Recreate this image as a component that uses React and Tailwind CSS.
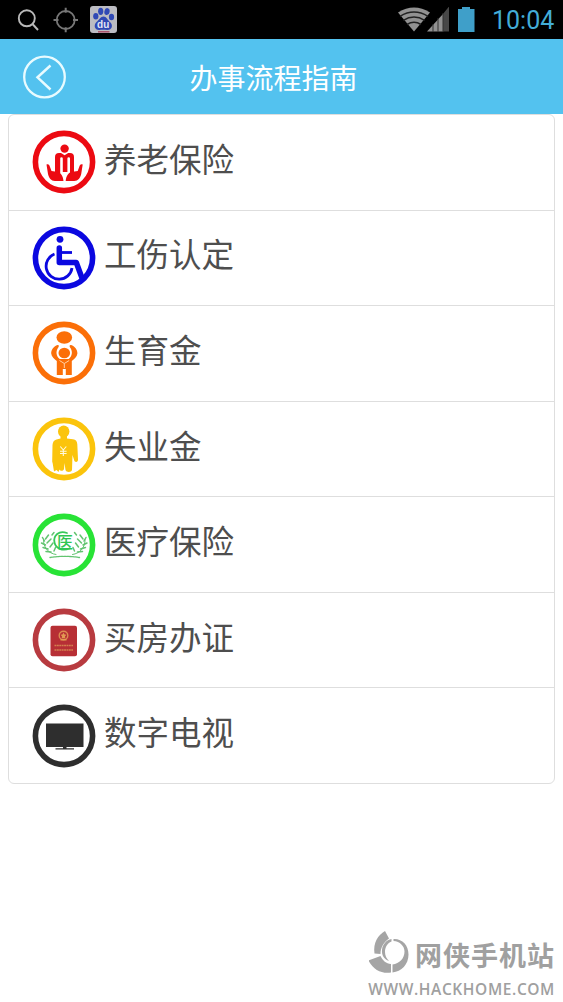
function Ring({ color, children }) {
  return (
    <svg viewBox="0 0 64 64" className="size-16 shrink-0" fill={color}>
      <circle cx="32" cy="32" r="28.6" fill="#fff" stroke={color} strokeWidth="5.6" />
      {children}
    </svg>
  )
}

function PensionIcon() {
  return (
    <Ring color="#ec0a12">
      <circle cx="32.6" cy="18.6" r="4.2" />
      <path d="M23 43V27q0-4 4-4h2l3.600 2.300L36.200 23H38q4 0 4 4v16h-4V28.500q0-1.300-1.300-1.300t-1.300 1.300V42h-4.600V28.500q0-1.300-1.300-1.300t-1.300 1.300V43z" />
      <path d="M14.500 34.500c2-.8 3 .5 3.500 2.500l1.500 4 6.500 1c3 .8 5 4 5.500 9H23c-4 0-6-3-7-7z" />
      <path d="M50.700 34.500c-2-.8-3 .5-3.500 2.500l-1.500 4-6.500 1c-3 .8-5 4-5.500 9h8.500c4 0 6-3 7-7z" />
    </Ring>
  )
}

function InjuryIcon() {
  return (
    <Ring color="#0b08e0">
      <circle cx="28" cy="13.300" r="3.400" />
      <path d="M27.300 22v14.500h17l5.500 15" fill="none" stroke="#0b08e0" strokeWidth="5.500" strokeLinejoin="round" strokeLinecap="round" />
      <path d="M28 26.500h12" stroke="#0b08e0" strokeWidth="2.800" />
      <path d="M22.500 28a13 13 0 1 0 17.500 14" fill="none" stroke="#0b08e0" strokeWidth="2.800" />
    </Ring>
  )
}

function BirthIcon() {
  return (
    <Ring color="#fb6f08">
      <ellipse cx="32.300" cy="16.500" rx="7.800" ry="6.200" />
      <path d="M25.500 24c-3.500 1-6.500 5-6.300 8.500.2 3 3.300 5.500 5.600 7.500V54h6V48h3v6h6V40c2.300-2 5.400-4.500 5.600-7.500.2-3.500-2.800-7.500-6.300-8.500-1.500-.3-2 1-1 2.500 3 4 2 9-1.500 11.500h-8.800c-3.500-2.500-4.500-7.500-1.500-11.500 1-1.500.7-2.800-.8-2.500z" />
      <ellipse cx="32.300" cy="32" rx="5.800" ry="5.300" />
      <path d="m27.500 39.500 4.800 3 4.900-3M32.300 42.500v4.500" fill="none" stroke="#ffd0a8" strokeWidth="1" />
    </Ring>
  )
}

function JoblessIcon() {
  return (
    <Ring color="#fbc40c">
      <ellipse cx="31.700" cy="14.500" rx="5.700" ry="6" />
      <path d="M28.500 19h6.500v2.500l6 .7c3 .6 4 2 4.300 5l.7 15c.2 3.500-3.500 3.500-4 .5L40.500 38 40 53c-.3 2.500-6 2.500-6.500 0L32.500 46 32 52c-.5 2.500-4 2-4.500.5L26.500 55l-2-2-2.500 1.500-1.300-8-.5-2L20.500 28c.3-3 1.500-5 4-5.500l4-1z" />
      <path d="m28.300 29.500 3 3.500 3-3.500M31.300 33v6M28 34.300h6.600M28 36.500h6.600" fill="none" stroke="#fffbe0" strokeWidth="1.100" />
    </Ring>
  )
}

function MedicalIcon() {
  return (
    <Ring color="#28e336">
      <g fill="none" stroke="#62c470" strokeWidth="1.500" strokeLinecap="round">
        <path d="M24 41.500c-8-1-13-8-12.500-15M40.500 41.500c8-1 13-8 12.500-15" strokeWidth="1" />
        <path d="m12.500 28-2-3.500M13.500 32l-4-2M16 36l-5-1.500M19 39l-5-.5M13.500 26l3-4M15 30l4-4M18 34l3-4M20 22l2-2.500M22 38l1.500-3.500M52 28l2-3.500M51 32l4-2M48.500 36l5-1.500M45.500 39l5-.5M51 26l-3-4M49.500 30l-4-4M46.500 34l-3-4M44.500 22l-2-2.500M42.500 38 41 34.500" />
        <path d="M18 44.500c9-1.500 20-1.500 29.500 0" strokeWidth="1.300" strokeDasharray="2 .8" />
        <path d="M35 20c-8-3-14 2.500-12.500 9.500 1.300 6 8 9 15 6" stroke="#38c95b" strokeWidth="1.800" />
      </g>
      <text x="33" y="34.500" textAnchor="middle" fill="#2fc653" className="font-['Noto_Sans_CJK_SC',sans-serif] text-[16px] font-medium">医</text>
    </Ring>
  )
}

function HouseIcon() {
  return (
    <Ring color="#b83b40">
      <rect x="18.500" y="17.700" width="26.500" height="30.500" rx="2" fill="#b72f35" />
      <circle cx="31.500" cy="27.500" r="4.300" fill="none" stroke="#dc8b50" strokeWidth="1.400" />
      <path d="m31.500 24.500 1 2 2 .3-1.500 1.500.3 2h-3.600l.3-2-1.500-1.500 2-.3zM28.500 31h6v1.500h-6z" fill="#e29a52" />
      <path d="M22.500 37.500h18.500M22.500 42h18.500" stroke="#d4804f" strokeWidth="1.700" strokeDasharray="1.900 .5" />
    </Ring>
  )
}

function TvIcon() {
  return (
    <Ring color="#2e2e2e">
      <path d="M14 19.500h37.500V43H14zM31 43h3.500v1.200H42v1.300H23.500v-1.300H31z" />
    </Ring>
  )
}

const ITEMS = [
  { label: '养老保险', Icon: PensionIcon },
  { label: '工伤认定', Icon: InjuryIcon },
  { label: '生育金', Icon: BirthIcon },
  { label: '失业金', Icon: JoblessIcon },
  { label: '医疗保险', Icon: MedicalIcon },
  { label: '买房办证', Icon: HouseIcon },
  { label: '数字电视', Icon: TvIcon },
]

function StatusBar() {
  return (
    <div className="flex h-[39px] items-center justify-between bg-black pl-[17px] pr-[9px]">
      <div className="flex items-center">
        <svg viewBox="0 0 22 22" className="size-[22px]" fill="none" stroke="#b9b9b9" strokeWidth="1.900">
          <circle cx="9.800" cy="9.300" r="8" />
          <path d="m15.500 15 5.500 6" />
        </svg>
        <svg viewBox="0 0 26 26" className="ml-[14px] size-[26px]" fill="none" stroke="#777" strokeWidth="1.800">
          <circle cx="12.700" cy="13" r="9" />
          <path d="M12.700 .800v5M12.700 20.200v5M.5 13h5M20 13h5" strokeWidth="2" />
        </svg>
        <svg viewBox="0 0 27 27" className="ml-[11px] size-[27px]">
          <rect width="27" height="27" rx="3" fill="#bcbcc2" />
          <g fill="#3049b5">
            <ellipse cx="5.800" cy="10.300" rx="2.600" ry="3.300" />
            <ellipse cx="10.700" cy="5.300" rx="2.600" ry="3.600" />
            <ellipse cx="17" cy="5.600" rx="2.600" ry="3.500" transform="rotate(12 17 5.600)" />
            <ellipse cx="21.500" cy="11" rx="2.600" ry="3.300" />
            <path d="M13.500 10.500c3 0 4 3.500 6.500 5.500 3.500 3 2 8-2.500 8-2.500 0-5.500-.5-8 0-4.500.5-6.500-4.500-3-8 2.500-2 4-5.500 7-5.500z" />
          </g>
          <path d="M8 25.800h11.500" stroke="#a94d67" strokeWidth="1.500" />
          <text x="13.200" y="21.600" textAnchor="middle" fill="#e4e6f4" className="font-['Liberation_Sans',sans-serif] text-[10px] font-bold">du</text>
        </svg>
      </div>
      <div className="flex items-center">
        <svg viewBox="0 0 32 25" className="h-[25px] w-8">
          <path d="M0 5.500Q16-4.500 32 5.500L16 24.500z" fill="#929292" />
          <path d="M2 9.300q14-8.500 28 0M5.300 13.300q10.700-6.500 21.400 0M9 17.500q7-4.500 14 0" fill="none" stroke="#222" strokeWidth="1.500" />
        </svg>
        <svg viewBox="0 0 23 25" className="-ml-[3px] h-[25px] w-[23px]">
          <path d="M0 24.500 16 7v17.500z" fill="#929292" />
          <path d="M16 7 22-.5v25h-6z" fill="#474747" />
          <path d="M6 17v8M11 11v14M16 6v19" stroke="#333" strokeWidth="1" />
        </svg>
        <svg viewBox="0 0 17 25" className="ml-[8px] h-[25px] w-[17px]" fill="#3f9fc9">
          <path d="M0 2h4V0h8v2h4.500v23H0z" />
        </svg>
        <span className="ml-[17px] w-[62px] whitespace-nowrap pt-[2px] text-right font-[Roboto,sans-serif] text-[25px] leading-[37px] text-[#43add7]">10:04</span>
      </div>
    </div>
  )
}

function Header() {
  return (
    <header className="grid h-[75px] grid-cols-[1fr_auto_1fr] items-center bg-[#53c2ef] pl-[23px] pr-[39px]">
      <svg viewBox="0 0 44 44" className="size-11" fill="none" stroke="#e8fbff" strokeWidth="2.300">
        <circle cx="21.500" cy="22" r="20.300" />
        <path d="M27.500 10.500 14.500 22.300l13 12.200" strokeWidth="2.500" />
      </svg>
      <h1 className="pt-[2px] text-[28px] font-normal leading-[73px] text-white">办事流程指南</h1>
    </header>
  )
}

function Watermark() {
  return (
    <div className="mt-auto flex flex-col items-end pb-[2px] pr-[8px] text-[#a0a0a0]">
      <div className="mb-[3px] flex items-center">
        <svg viewBox="0 0 42 44" className="-mt-[4px] h-11 w-[42px]" fill="#a5a5a5">
          <path d="M16 0 20 7.500c-5.500 4-8.500 9.500-8.500 15.500L5.500 22.500C4 12 9 4 16 0z" />
          <path d="M-.5 29.500 11.500 25c2.500 5 5.500 7.500 10.500 8v8.500C12.500 43 4 38.500-.5 29.500z" />
          <path d="M23.500 41.500V33.500c7-1 12-6 12-13 0-5.500-4.500-10-11-10.500V8c8.500-.5 15 6 15 15.500 0 10-7 17-16 18z" />
          <path d="M22.500 8v2.500c-4.500 2-6.500 6-6.500 10.500 0 3.500 1.500 6.500 4 9-5-2-7.500-6-7-11C13.500 13 17.500 9 22.500 8z" />
        </svg>
        <span className="ml-[4px] text-[27px] font-bold leading-[38px] tracking-[1px]">网侠手机站</span>
      </div>
      <span className="font-['Open_Sans',sans-serif] text-[15.500px] font-semibold leading-[22px] tracking-[0.600px]">WWW.HACKHOME.COM</span>
    </div>
  )
}

export default function App() {
  return (
    <div className="flex h-[1002px] w-[563px] flex-col overflow-hidden bg-white font-['Noto_Sans_CJK_SC',sans-serif]">
      <StatusBar />
      <Header />
      <ul className="mx-2 flex h-[670px] flex-col divide-y divide-[#dedede] rounded-md border border-[#dedede]">
        {ITEMS.map(({ label, Icon }) => (
          <li key={label} className="flex flex-1 items-center pl-[23px]">
            <Icon />
            <span className="ml-[8px] pb-[9px] text-[32.500px] leading-[48px] text-[#4e4e4e]">{label}</span>
          </li>
        ))}
      </ul>
      <Watermark />
    </div>
  )
}
